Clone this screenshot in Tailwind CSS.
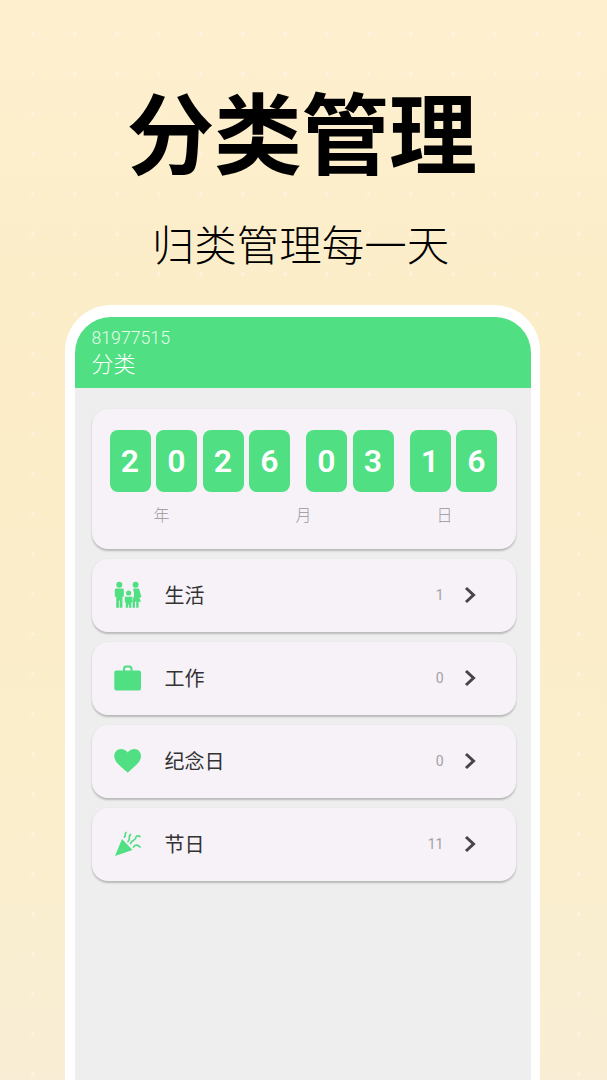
<!DOCTYPE html>
<html lang="zh">
  <head>
    <meta charset="UTF-8" />
    <title>分类管理</title>
    <script src="https://cdn.jsdelivr.net/npm/@tailwindcss/browser@4"></script>
  </head>
  <body class="m-0 overflow-hidden">
    <div class="relative w-[607px] h-[1080px] overflow-hidden flex flex-col items-center bg-[linear-gradient(180deg,#feefcf_0%,#fcedc8_35%,#fbeecb_70%,#f9eed5_100%)] font-['Noto_Sans_CJK_SC','Noto_Sans',sans-serif]">
      <!-- dot pattern -->
      <div class="absolute inset-0 bg-[radial-gradient(circle,rgba(255,255,255,0.28)_1.6px,transparent_2.6px)] bg-[size:42px_40px] bg-[position:12px_14px]"></div>

      <!-- heading -->
      <h1 class="relative mt-[70px] ml-[-4px] h-[118px] text-[88px] leading-[118px] font-bold text-black tracking-[-0.5px] whitespace-nowrap">分类管理</h1>
      <p class="relative mt-[24px] ml-[-6px] h-[62px] text-[42.5px] leading-[62px] font-light text-black whitespace-nowrap">归类管理每一天</p>

      <!-- phone -->
      <div class="relative mt-[31px] ml-[-3px] w-[475px] flex-1 bg-white rounded-t-[46px] pt-[12px] px-[10px]">
        <div class="h-[800px] w-[456px] bg-[#eeeeee] rounded-t-[36px] overflow-hidden">
          <!-- app bar -->
          <div class="h-[71px] bg-[#50df82] pl-[17px] pt-[11px] text-white">
            <div class="text-[17.7px] leading-[20px] font-light text-white/85 font-['Roboto',sans-serif]">81977515</div>
            <div class="text-[22px] leading-[28px] font-light">分类</div>
          </div>

          <div class="pl-[17px] pr-[15px] pt-[20.5px] flex flex-col gap-[10px]">
            <!-- date card -->
            <div class="h-[140px] rounded-[16px] bg-[#f6f2f8] shadow-[0_1.5px_2px_rgba(0,0,0,0.22)] pt-[21.5px] pl-[18px]">
              <div class="flex font-['Roboto',sans-serif] text-white text-[32px] font-semibold">
                <div class="flex gap-[5.5px]">
                  <div class="w-[41px] h-[62px] rounded-[8px] bg-[#50df82] flex items-center justify-center">2</div>
                  <div class="w-[41px] h-[62px] rounded-[8px] bg-[#50df82] flex items-center justify-center">0</div>
                  <div class="w-[41px] h-[62px] rounded-[8px] bg-[#50df82] flex items-center justify-center">2</div>
                  <div class="w-[41px] h-[62px] rounded-[8px] bg-[#50df82] flex items-center justify-center">6</div>
                </div>
                <div class="flex gap-[5.5px] ml-[16px]">
                  <div class="w-[41px] h-[62px] rounded-[8px] bg-[#50df82] flex items-center justify-center">0</div>
                  <div class="w-[41px] h-[62px] rounded-[8px] bg-[#50df82] flex items-center justify-center">3</div>
                </div>
                <div class="flex gap-[5.5px] ml-[16px]">
                  <div class="w-[41px] h-[62px] rounded-[8px] bg-[#50df82] flex items-center justify-center">1</div>
                  <div class="w-[41px] h-[62px] rounded-[8px] bg-[#50df82] flex items-center justify-center">6</div>
                </div>
              </div>
              <div class="relative h-[24px] mt-[10px] text-[16px] leading-[24px] text-[#99969b] font-light">
                <span class="absolute left-[44px]">年</span>
                <span class="absolute left-[186px]">月</span>
                <span class="absolute left-[327px]">日</span>
              </div>
            </div>

            <!-- 生活 -->
            <div class="h-[73px] rounded-[16px] bg-[#f6f2f8] shadow-[0_1.5px_2px_rgba(0,0,0,0.22)] flex items-center pl-[22px] pr-[40px]">
              <svg class="w-[30px] h-[30px] shrink-0" viewBox="0 0 30 30" fill="#50df82">
                <circle cx="5.3" cy="4.8" r="3" />
                <path d="M0.8 10Q0.8 8.6 2.2 8.6H8.4Q9.8 8.6 9.8 10V16.5L8.4 17V27.7H5.7V20.5H4.9V27.7H2.2V17L0.8 16.5Z" />
                <circle cx="14.6" cy="13" r="2.6" />
                <path d="M10.8 16.8H18.4V22L17.4 22.5V27.7H15V24.5H14.2V27.7H11.8V22.5L10.8 22Z" />
                <circle cx="21.6" cy="4.8" r="3" />
                <path d="M19 8.6H24Q25 8.6 25.5 10L27.4 17L25.3 17.8L27 21.8H24.6V27.7H22.2V21.8H21V27.7H18.6V21.8H18.2L20 15.5V13Z" />
              </svg>
              <span class="ml-[21px] text-[20px] font-normal text-[#333333]">生活</span>
              <span class="ml-auto text-[14px] text-[#a3a0a5] font-['Roboto',sans-serif]">1</span>
              <svg class="ml-[20px] w-[12px] h-[18px]" viewBox="0 0 12 18" fill="none" stroke="#47444a" stroke-width="3"><path d="M2 2L9.5 9L2 16" /></svg>
            </div>

            <!-- 工作 -->
            <div class="h-[73px] rounded-[16px] bg-[#f6f2f8] shadow-[0_1.5px_2px_rgba(0,0,0,0.22)] flex items-center pl-[22px] pr-[40px]">
              <svg class="w-[30px] h-[30px] shrink-0" viewBox="0 0 30 30" fill="#50df82">
                <path d="M9 6Q9 2.5 12 2.5H15.5Q18.5 2.5 18.5 6V7.5H25Q27 7.5 27 9.5V25.5Q27 27.5 25 27.5H2.3Q0.3 27.5 0.3 25.5V9.5Q0.3 7.5 2.3 7.5H9ZM11 7.5H16.5V6Q16.5 4.5 15 4.5H12.5Q11 4.5 11 6Z" fill-rule="evenodd" />
              </svg>
              <span class="ml-[21px] text-[20px] font-normal text-[#333333]">工作</span>
              <span class="ml-auto text-[14px] text-[#a3a0a5] font-['Roboto',sans-serif]">0</span>
              <svg class="ml-[20px] w-[12px] h-[18px]" viewBox="0 0 12 18" fill="none" stroke="#47444a" stroke-width="3"><path d="M2 2L9.5 9L2 16" /></svg>
            </div>

            <!-- 纪念日 -->
            <div class="h-[73px] rounded-[16px] bg-[#f6f2f8] shadow-[0_1.5px_2px_rgba(0,0,0,0.22)] flex items-center pl-[22px] pr-[40px]">
              <svg class="w-[30px] h-[30px] shrink-0" viewBox="0 0 30 30" fill="#50df82">
                <path d="M13.7 26.7C10 22.5 0.3 17.5 0.3 10C0.3 5.8 3.5 3 7 3C9.6 3 12.2 4.2 13.7 6.6C15.2 4.2 17.8 3 20.4 3C23.9 3 27 5.8 27 10C27 17.5 17.4 22.5 13.7 26.7Z" />
              </svg>
              <span class="ml-[21px] text-[20px] font-normal text-[#333333]">纪念日</span>
              <span class="ml-auto text-[14px] text-[#a3a0a5] font-['Roboto',sans-serif]">0</span>
              <svg class="ml-[20px] w-[12px] h-[18px]" viewBox="0 0 12 18" fill="none" stroke="#47444a" stroke-width="3"><path d="M2 2L9.5 9L2 16" /></svg>
            </div>

            <!-- 节日 -->
            <div class="h-[73px] rounded-[16px] bg-[#f6f2f8] shadow-[0_1.5px_2px_rgba(0,0,0,0.22)] flex items-center pl-[22px] pr-[40px]">
              <svg class="w-[30px] h-[30px] shrink-0" viewBox="0 0 30 30">
                <path d="M1 27L8 10L18.5 21Z" fill="#50df82" />
                <g fill="none" stroke="#50df82" stroke-width="1.7" stroke-linecap="round">
                  <path d="M10.5 8C12.5 6.5 10 5.5 12 3.5" />
                  <path d="M14 12.5C17 10.5 13.5 8 16.5 5.5" />
                  <path d="M16.5 14.5C18 10.5 22 12 22 8C22.5 6.5 24.5 6.5 26 7.5" />
                  <path d="M19.5 18C21 15.5 24 15.5 26 18" />
                </g>
              </svg>
              <span class="ml-[21px] text-[20px] font-normal text-[#333333]">节日</span>
              <span class="ml-auto text-[14px] text-[#a3a0a5] font-['Roboto',sans-serif]">11</span>
              <svg class="ml-[20px] w-[12px] h-[18px]" viewBox="0 0 12 18" fill="none" stroke="#47444a" stroke-width="3"><path d="M2 2L9.5 9L2 16" /></svg>
            </div>
          </div>
        </div>
      </div>
    </div>
  </body>
</html>
